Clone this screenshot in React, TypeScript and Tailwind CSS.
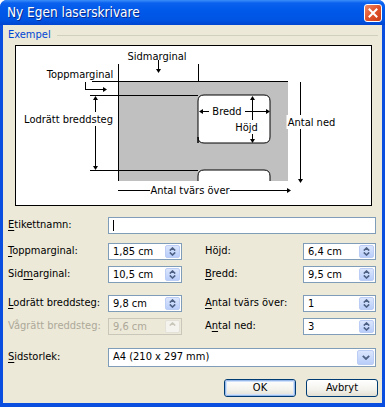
import React from "react";

const font = "font-['DejaVu_Sans_Condensed','Liberation_Sans',sans-serif]";
const svgFont = "'DejaVu Sans Condensed', 'Liberation Sans', sans-serif";

function Head({ x, y, dir }: { x: number; y: number; dir: "up" | "down" | "left" | "right" }) {
  let pts = "";
  if (dir === "down") pts = `${x - 2.5},${y - 4} ${x + 2.5},${y - 4} ${x},${y}`;
  if (dir === "up") pts = `${x - 2.5},${y + 4} ${x + 2.5},${y + 4} ${x},${y}`;
  if (dir === "right") pts = `${x - 4},${y - 2.5} ${x - 4},${y + 2.5} ${x},${y}`;
  if (dir === "left") pts = `${x + 4},${y - 2.5} ${x + 4},${y + 2.5} ${x},${y}`;
  return <polygon points={pts} fill="#000" />;
}

function Label({ x, y, w, text }: { x: number; y: number; w: number; text: string }) {
  return (
    <g>
      <rect x={x - w / 2} y={y - 7} width={w} height={14} fill="#fff" />
      <text x={x} y={y + 0.5} textAnchor="middle" dominantBaseline="central" fontSize={11} fontFamily={svgFont} fill="#000">
        {text}
      </text>
    </g>
  );
}

function Diagram() {
  return (
    <div className="ml-[12px] w-[357px] h-[161px] border border-black bg-white">
      <svg width="355" height="159" viewBox="0 0 355 159">
        <g transform="translate(-1,-1)">
          {/* sheet */}
          <rect x={103} y={36} width={170} height={100} fill="#c0c0c0" />
          <path d="M183,98 V56 Q183,50 189,50 H249 Q255,50 255,56 V92 Q255,98 249,98 H189 Q183,98 183,92 Z" fill="#fff" stroke="#000" />
          <path d="M183,136 V131 Q183,125 189,125 H249 Q255,125 255,131 V136" fill="#fff" stroke="#000" />
          <g stroke="#000" strokeWidth={1} shapeRendering="crispEdges">
            <line x1={103.5} y1={19} x2={103.5} y2={136} />
            <line x1={77} y1={36.5} x2={273} y2={36.5} />
            <line x1={183.5} y1={19} x2={183.5} y2={36} />
            <line x1={143.5} y1={15} x2={143.5} y2={26} />
            <line x1={70.5} y1={37} x2={70.5} y2={44} />
            <line x1={70} y1={44.5} x2={88} y2={44.5} />
            <line x1={75} y1={50.5} x2={183} y2={50.5} />
            <line x1={75} y1={125.5} x2={183} y2={125.5} />
            <line x1={80.5} y1={52} x2={80.5} y2={124} />
            <line x1={185} y1={66.5} x2={254} y2={66.5} />
            <line x1={237.5} y1={52} x2={237.5} y2={97} />
            <line x1={285.5} y1={37} x2={285.5} y2={134} />
            <line x1={103} y1={145.5} x2={272} y2={145.5} />
          </g>
          <Head x={143.5} y={28} dir="down" />
          <Head x={92} y={44.5} dir="right" />
          <Head x={80.5} y={51} dir="up" />
          <Head x={80.5} y={125} dir="down" />
          <Head x={184} y={66.5} dir="left" />
          <Head x={255} y={66.5} dir="right" />
          <Head x={237.5} y={51} dir="up" />
          <Head x={237.5} y={98} dir="down" />
          <Head x={285.5} y={138} dir="down" />
          <Head x={276} y={145.5} dir="right" />
          <text x={142} y={11.5} textAnchor="middle" dominantBaseline="central" fontSize={11} fontFamily={svgFont}>
            Sidmarginal
          </text>
          <text x={65} y={29.5} textAnchor="middle" dominantBaseline="central" fontSize={11} fontFamily={svgFont}>
            Toppmarginal
          </text>
          <Label x={53.5} y={74} w={92} text="Lodrätt breddsteg" />
          <Label x={212} y={66} w={36} text="Bredd" />
          <Label x={231.5} y={82} w={27} text="Höjd" />
          <Label x={296.5} y={77} w={50} text="Antal ned" />
          <Label x={175} y={145} w={80} text="Antal tvärs över" />
        </g>
      </svg>
    </div>
  );
}

function Spin({ disabled }: { disabled?: boolean }) {
  const c = disabled ? "#c9c7ba" : "#4d6185";
  return (
    <div
      className={`w-[15px] self-stretch my-[1px] mr-[1px] rounded-[2px] flex flex-col ${
        disabled ? "bg-[#f4f3ee] border border-[#e4e2d8]" : "bg-[linear-gradient(to_bottom,#dbe6fd,#b8cdf9)] border border-[#bccdf5]"
      }`}
    >
      <div className="flex-1 flex items-center justify-center">
        <svg width="7" height="4" viewBox="0 0 7 4">
          <polyline points="0.8,3.6 3.5,1 6.2,3.6" fill="none" stroke={c} strokeWidth={1.6} />
        </svg>
      </div>
      {!disabled && (
        <div className="flex-1 flex items-center justify-center">
          <svg width="7" height="4" viewBox="0 0 7 4">
            <polyline points="0.8,0.4 3.5,3 6.2,0.4" fill="none" stroke={c} strokeWidth={1.6} />
          </svg>
        </div>
      )}
      {disabled && <div className="flex-1" />}
    </div>
  );
}

function NumField({ value, w, disabled }: { value: string; w: string; disabled?: boolean }) {
  return (
    <div
      className={`${w} h-[17px] border flex items-center ${
        disabled ? "border-[#c9c7ba] bg-[#ece9d8] text-[#aca899]" : "border-[#7f9db9] bg-white text-black"
      }`}
    >
      <span className="flex-1 pl-[4px] leading-none">{value}</span>
      <Spin disabled={disabled} />
    </div>
  );
}

function U({ children }: { children: React.ReactNode }) {
  return <span className="underline underline-offset-[2px]">{children}</span>;
}

function Row({
  left,
  lv,
  right,
  rv,
  ld,
}: {
  left: React.ReactNode;
  lv: string;
  right: React.ReactNode;
  rv: string;
  ld?: boolean;
}) {
  return (
    <div className="flex items-center h-[17px]">
      <div className={`w-[100px] ${ld ? "text-[#aca899]" : ""}`}>{left}</div>
      <NumField value={lv} w="w-[74px]" disabled={ld} />
      <div className="w-[23px]" />
      <div className="w-[98px]">{right}</div>
      <NumField value={rv} w="w-[73px]" />
    </div>
  );
}

function Button({ label, primary }: { label: string; primary?: boolean }) {
  return (
    <div className="w-[72px] h-[18px] rounded-[3px] border border-[#003c74] bg-[linear-gradient(to_bottom,#ffffff,#f3f2ec_60%,#e3e0d3)] flex items-center justify-center">
      <div
        className={`w-full h-full rounded-[2px] flex items-center justify-center ${
          primary ? "border border-[#98b8ea] shadow-[inset_0_0_0_1px_#cee2fb]" : ""
        }`}
      >
        {label}
      </div>
    </div>
  );
}

export default function App() {
  return (
    <div className={`w-[385px] h-[407px] flex flex-col bg-[#0a4ee0] rounded-t-[7px] overflow-hidden text-[11px] text-black ${font}`}>
      <div className="h-[25px] flex items-center bg-[linear-gradient(to_bottom,#3d8ff9_0%,#0a61ef_12%,#0058e9_45%,#0054e3_80%,#0046cf_100%)] px-[7px]">
        <span className="text-white text-[13.5px] flex-1 [text-shadow:1px_1px_0_#0a2a8a]">Ny Egen laserskrivare</span>
        <div className="w-[18px] h-[18px] rounded-[3px] border border-white bg-[linear-gradient(135deg,#f08a66,#e0522a_50%,#c83c17)] flex items-center justify-center mr-[-4px]">
          <svg width="10" height="10" viewBox="0 0 10 10">
            <path d="M1.5 1.5 L8.5 8.5 M8.5 1.5 L1.5 8.5" stroke="#fff" strokeWidth={2} strokeLinecap="square" />
          </svg>
        </div>
      </div>
      <div className="flex-1 mx-[3px] mb-[4px] bg-[#ece9d8] flex flex-col pl-[5px]">
        <div className="h-[20px] flex items-center">
          <span className="text-[#0046d5]">Exempel</span>
          <div className="flex-1 h-px bg-[#d0d0bf] ml-[6px] mr-[4px]" />
        </div>
        <div className="-ml-[5px]">
          <Diagram />
        </div>
        <div className="mt-[11px] flex items-center h-[17px]">
          <div className="w-[100px]">
            <U>E</U>tikettnamn:
          </div>
          <div className="w-[268px] h-[17px] border border-[#7f9db9] bg-white flex items-center pl-[4px]">
            <div className="w-px h-[11px] bg-black" />
          </div>
        </div>
        <div className="mt-[9px]">
          <Row
            left={<><U>T</U>oppmarginal:</>}
            lv="1,85 cm"
            right={<>Höjd:</>}
            rv="6,4 cm"
          />
        </div>
        <div className="mt-[6px]">
          <Row
            left={<>Sid<U>m</U>arginal:</>}
            lv="10,5 cm"
            right={<><U>B</U>redd:</>}
            rv="9,5 cm"
          />
        </div>
        <div className="mt-[12px]">
          <Row
            left={<><U>L</U>odrätt breddsteg:</>}
            lv="9,8 cm"
            right={<><U>A</U>ntal tvärs över:</>}
            rv="1"
          />
        </div>
        <div className="mt-[6px]">
          <Row
            left={<>Vågrätt breddsteg:</>}
            lv="9,6 cm"
            ld
            right={<>A<U>n</U>tal ned:</>}
            rv="3"
          />
        </div>
        <div className="mt-[13px] flex items-center h-[19px]">
          <div className="w-[100px]">
            <U>S</U>idstorlek:
          </div>
          <div className="w-[268px] h-[19px] border border-[#7f9db9] bg-white flex items-center">
            <span className="flex-1 pl-[4px]">A4 (210 x 297 mm)</span>
            <div className="w-[17px] self-stretch my-[1px] mr-[1px] rounded-[2px] bg-[linear-gradient(to_bottom,#dbe6fd,#b8cdf9)] border border-[#bccdf5] flex items-center justify-center">
              <svg width="8" height="5" viewBox="0 0 8 5">
                <polyline points="0.8,0.8 4,4 7.2,0.8" fill="none" stroke="#4d6185" strokeWidth={1.8} />
              </svg>
            </div>
          </div>
        </div>
        <div className="mt-[12px] flex justify-end gap-[10px] pr-[4px]">
          <Button label="OK" primary />
          <Button label="Avbryt" />
        </div>
      </div>
    </div>
  );
}
